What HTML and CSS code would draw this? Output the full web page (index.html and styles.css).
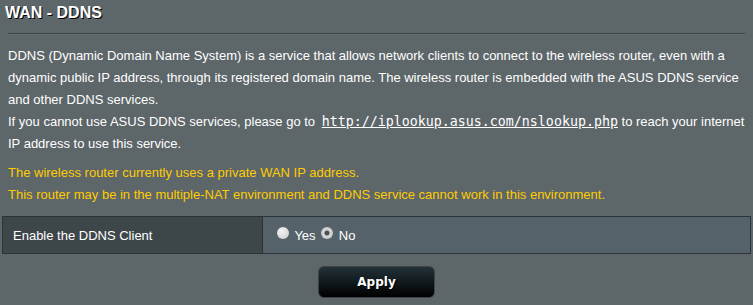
FILE: index.html
```html
<!DOCTYPE html>
<html lang="en">
<head>
    <meta charset="UTF-8">
    <title>WAN - DDNS</title>
    <link rel="stylesheet" href="styles.css">
</head>
<body>
    <div class="form-page">
        <div class="form-title">WAN - DDNS</div>
        <div class="split-line"></div>

        <div class="form-desc">
            DDNS (Dynamic Domain Name System) is a service that allows network clients to connect to the wireless router, even with a dynamic public IP address, through its registered domain name. The wireless router is embedded with the ASUS DDNS service and other DDNS services.<br>
            If you cannot use ASUS DDNS services, please go to <a class="lookup-link" href="#">http://iplookup.asus.com/nslookup.php</a> to reach your internet IP address to use this service.
        </div>

        <div class="form-hint">
            The wireless router currently uses a private WAN IP address.<br>
            This router may be in the multiple-NAT environment and DDNS service cannot work in this environment.
        </div>

        <table class="form-table">
            <tr>
                <th>Enable the DDNS Client</th>
                <td>
                    <label class="radio-opt"><input type="radio" name="ddns_enable" value="1"> Yes</label>
                    <label class="radio-opt"><input type="radio" name="ddns_enable" value="0" checked> No</label>
                </td>
            </tr>
        </table>

        <div class="apply-row">
            <button class="button-gen">Apply</button>
        </div>
    </div>
</body>
</html>
```

FILE: styles.css
```css
body {
    margin: 0;
    background-color: #5d6669;
    font-family: Arial, "Liberation Sans", sans-serif;
    font-size: 13px;
    color: #fff;
}
.form-page {
    padding: 3px 2px 0 2px;
}
.form-title {
    font-size: 16px;
    font-weight: bold;
    line-height: 20px;
    padding-left: 3px;
    text-shadow: 1px 1px 0 #000;
}
.split-line {
    margin: 10px 6px 0 6px;
    height: 1px;
    background-color: #3a4246;
    border-bottom: 1px solid #667074;
}
.form-desc {
    margin-top: 10px;
    padding: 0 6px;
    line-height: 22px;
}
.lookup-link {
    color: #fff;
    font-family: "DejaVu Sans Mono", "Liberation Mono", monospace;
    font-size: 13.3px;
    line-height: 16px;
    margin-left: 3px;
    text-decoration: underline;
}
.form-hint {
    margin-top: 7px;
    padding: 0 6px;
    line-height: 22px;
    color: #ffcc00;
}
.form-table {
    margin-top: 10px;
    width: 100%;
    border-collapse: collapse;
    border: 1px solid #2b3438;
}
.form-table th {
    width: 249px;
    height: 36px;
    padding: 0 0 0 10px;
    text-align: left;
    font-weight: normal;
    background-color: #3d4649;
    border-right: 1px solid #2b3438;
}
.form-table td {
    padding: 0 0 0 14px;
    background-color: #56626a;
}
.radio-opt {
    margin-right: 2px;
}
.radio-opt input {
    appearance: none;
    -webkit-appearance: none;
    width: 12px;
    height: 12px;
    margin: 0 2px 0 0;
    border-radius: 50%;
    background: radial-gradient(circle at 40% 35%, #f4f4f4, #c9c9c9);
    vertical-align: 1px;
}
.radio-opt input:checked {
    background: radial-gradient(circle, #4a4f52 0 2px, #d8d8d8 3px, #bdbdbd);
}
.apply-row {
    margin-top: 12px;
    text-align: center;
}
.button-gen {
    width: 117px;
    height: 32px;
    border: 1px solid #3c4447;
    border-radius: 6px;
    background: linear-gradient(to bottom, #233238 0%, #000 100%);
    color: #fff;
    font-family: Verdana, "DejaVu Sans", sans-serif;
    font-size: 12px;
    font-weight: bold;
    text-shadow: 1px 1px 0 #000;
}
```
